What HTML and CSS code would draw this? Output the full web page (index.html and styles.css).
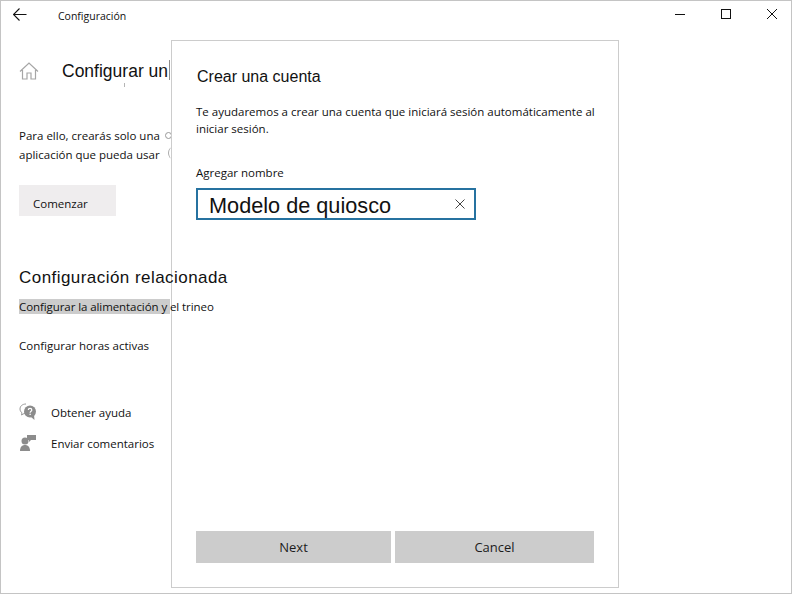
FILE: index.html
```html
<!DOCTYPE html>
<html lang="es">
<head>
    <meta charset="UTF-8">
    <title>Configuración</title>
    <link rel="stylesheet" href="styles.css">
</head>
<body>
    <div class="window">
        <div class="titlebar">
            <svg class="back-icon" width="14" height="13" viewBox="0 0 14 13"><path d="M6.500.5l-6 6 6 6M.5 6.500h13" fill="none" stroke="#111" stroke-width="1.100"/></svg>
            <span class="app-name">Configuración</span>
            <div class="window-controls">
                <svg width="12" height="12" viewBox="0 0 12 12"><path d="M1 6.500h10" stroke="#111" fill="none"/></svg>
                <svg width="12" height="12" viewBox="0 0 12 12"><rect x="1.500" y="1.500" width="9" height="9" stroke="#111" fill="none"/></svg>
                <svg width="12" height="12" viewBox="0 0 12 12"><path d="M1 1l10 10M11 1 1 11" stroke="#111" fill="none"/></svg>
            </div>
        </div>

        <div class="settings">
            <div class="page-head">
                <svg class="home-icon" width="20" height="20" viewBox="0 0 20 20"><path d="M1 10.500 10 2l9 8.500M3.500 9v9h4.500v-6h4v6h4.500V9" fill="none" stroke="#a6a6a6" stroke-width="1.200"/></svg>
                <h1>Configurar un</h1>
            </div>
            <p class="intro">Para ello, crearás solo una<br>aplicación que pueda usar</p>
            <button class="start-btn">Comenzar</button>
            <h2>Configuración relacionada</h2>
            <a class="link link-active">Configurar la alimentación y el trineo</a>
            <a class="link">Configurar horas activas</a>
            <div class="help-list">
                <div class="help-row">
                    <svg width="18" height="18" viewBox="0 0 18 18">
                        <path d="M7 1C3.500 1 1 3 1 6c0 1.700.8 3 2 3.800L2.500 12 6 10" fill="none" stroke="#9a9a9a"/>
                        <circle cx="11" cy="8.500" r="6" fill="#8c8c8c"/>
                        <path d="M12 14l3.500 3-.5-5z" fill="#8c8c8c"/>
                        <path d="M9.300 7c0-2.300 3.500-2.300 3.500 0 0 1.300-1.700 1.300-1.700 2.700" fill="none" stroke="#fff" stroke-width="1.200"/>
                        <rect x="10.500" y="10.700" width="1.300" height="1.300" fill="#fff"/>
                    </svg>
                    <span>Obtener ayuda</span>
                </div>
                <div class="help-row">
                    <svg width="18" height="18" viewBox="0 0 18 18">
                        <circle cx="6" cy="7" r="3.500" fill="#8c8c8c"/>
                        <path d="M1 17c0-4 2-6 5-6s5 2 5 6z" fill="#8c8c8c"/>
                        <path d="M8 1h9v5h-5l-2 2V6H8z" fill="#8c8c8c"/>
                    </svg>
                    <span>Enviar comentarios</span>
                </div>
            </div>
        </div>

        <!-- leftovers of the page showing next to the dialog edge -->
        <span class="scrap scrap-bar"></span>
        <span class="scrap scrap-tick"></span>
        <span class="scrap scrap-dot"></span>
        <span class="scrap scrap-arc"></span>

        <div class="dialog">
            <div class="dialog-title">Crear una cuenta</div>
            <p class="dialog-text">Te ayudaremos a crear una cuenta que iniciará sesión automáticamente al iniciar sesión.</p>
            <label class="field-label">Agregar nombre</label>
            <div class="name-field">
                <span>Modelo de quiosco</span>
                <svg width="10" height="10" viewBox="0 0 10 10"><path d="M.5.5l9 9M9.500.5l-9 9" stroke="#444" fill="none"/></svg>
            </div>
            <div class="dialog-actions">
                <button class="next-btn">Next</button>
                <button class="cancel-btn">Cancel</button>
            </div>
        </div>
    </div>
</body>
</html>
```

FILE: styles.css
```css
* {
    box-sizing: border-box;
}
body {
    margin: 0;
    font-family: "Open Sans", Arial, sans-serif;
    color: #111;
    background-color: white;
}
.window {
    position: relative;
    width: 792px;
    height: 594px;
    border: 1px solid #c4c4c4;
    overflow: hidden;
}
.titlebar {
    display: flex;
    align-items: center;
    height: 30px;
    padding-left: 12px;
}
.back-icon {
    margin-top: -4px;
}
.app-name {
    margin-left: 31px;
    font-size: 10.5px;
}
.window-controls {
    display: flex;
    gap: 34px;
    margin-left: auto;
    margin-right: 13px;
    margin-top: -5px;
}
.settings {
    padding: 0 0 0 18px;
}
.page-head {
    display: flex;
    align-items: center;
    margin-top: 28px;
    height: 24px;
}
.home-icon {
    flex-shrink: 0;
}
.page-head h1 {
    margin: 0 0 0 23px;
    font-family: "Liberation Sans", Arial, sans-serif;
    font-size: 17.5px;
    font-weight: normal;
    white-space: nowrap;
}
.intro {
    margin: 44px 0 0;
    font-size: 11.5px;
    line-height: 18.5px;
}
.start-btn {
    display: block;
    width: 97px;
    height: 31px;
    margin-top: 21px;
    padding: 5px 0 0 14px;
    border: none;
    background-color: #efedee;
    color: #111;
    font-family: inherit;
    font-size: 11.5px;
    text-align: left;
}
/* these two sit above the dialog in the reference */
.settings h2 {
    position: relative;
    z-index: 2;
    margin: 51px 0 0;
    font-family: "Liberation Sans", Arial, sans-serif;
    font-size: 17px;
    font-weight: normal;
    letter-spacing: 0.45px;
    line-height: 22px;
}
.link {
    display: block;
    width: 195px;
    font-size: 11.5px;
    line-height: 15px;
    white-space: nowrap;
}
.link-active {
    position: relative;
    z-index: 2;
    margin-top: 10px;
    width: 151px;
    letter-spacing: -0.08px;
    background-color: #cccccc;
}
.link + .link {
    margin-top: 24px;
}
.help-list {
    margin-top: 50px;
}
.help-row {
    display: flex;
    align-items: center;
    height: 18px;
    margin-bottom: 13px;
    font-size: 11.5px;
}
.help-row span {
    margin-left: 14px;
}
.scrap {
    position: absolute;
}
.scrap-bar {
    left: 168px;
    top: 59px;
    width: 1px;
    height: 20px;
    background-color: #8d8d8d;
}
.scrap-tick {
    left: 123px;
    top: 82px;
    width: 1px;
    height: 4px;
    background-color: #b5b5b5;
}
.scrap-dot {
    left: 164px;
    top: 131px;
    width: 7px;
    height: 7px;
    border: 1px solid #999;
    border-radius: 50%;
}
.scrap-arc {
    left: 167px;
    top: 146px;
    width: 10px;
    height: 12px;
    border-left: 1px solid #aaa;
    border-radius: 50%;
}
.dialog {
    position: absolute;
    z-index: 1;
    left: 170px;
    top: 39px;
    width: 448px;
    height: 548px;
    display: flex;
    flex-direction: column;
    padding: 26px 24px 24px 24px;
    background-color: white;
    border: 1px solid #cccccc;
}
.dialog-title {
    margin-left: 1px;
    font-family: "Liberation Sans", Arial, sans-serif;
    font-size: 16px;
    line-height: 20px;
}
.dialog-text {
    margin: 16px -4px 0 0;
    font-size: 11.5px;
    line-height: 17px;
}
.field-label {
    margin-top: 28px;
    font-size: 11.5px;
    line-height: 16px;
}
.name-field {
    display: flex;
    align-items: center;
    justify-content: space-between;
    width: 280px;
    height: 32px;
    margin-top: 7px;
    padding: 3px 9px 0 11px;
    border: 2px solid #2672a0;
    font-family: "Liberation Sans", Arial, sans-serif;
    font-size: 21.7px;
}
.name-field svg {
    margin-top: -3px;
}
.dialog-actions {
    display: flex;
    gap: 4px;
    margin-top: auto;
}
.dialog-actions button {
    height: 32px;
    border: none;
    background-color: #cccccc;
    color: #1c1c1c;
    font-family: inherit;
    font-size: 13px;
}
.next-btn {
    width: 195px;
}
.cancel-btn {
    width: 199px;
}
```
